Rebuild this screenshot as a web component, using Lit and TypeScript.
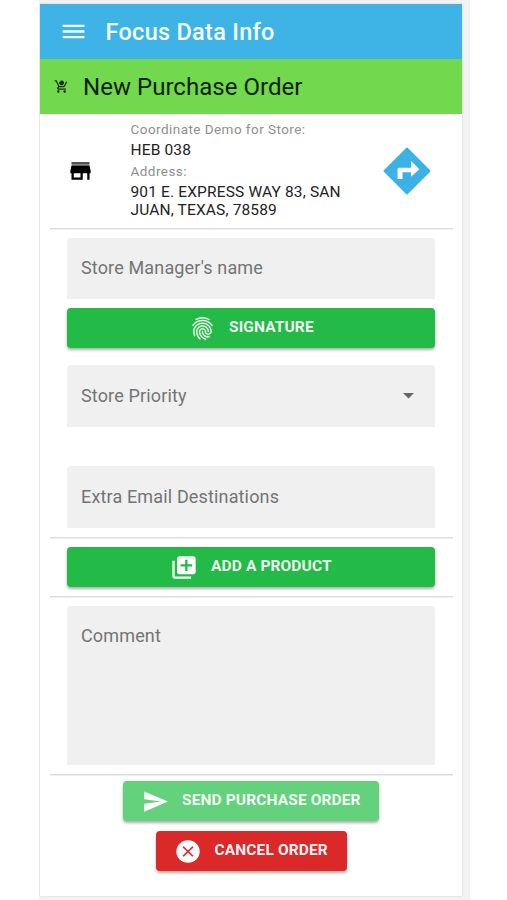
import { LitElement, html, css, svg } from "lit";
import { customElement } from "lit/decorators.js";

const icon = (cls: string, viewBox: string, body: unknown) =>
  html`<svg class="icon ${cls}" viewBox=${viewBox} preserveAspectRatio="none" aria-hidden="true">${body}</svg>`;

const menu = svg`<path d="M3 18.100h18v-2.200H3v2.200zm0-5h18v-2.200H3v2.200zm0-7.200v2.200h18V5.900H3z"/>`;
const cart = svg`<path d="M7 18c-1.100 0-2 .9-2 2s.9 2 2 2 2-.9 2-2-.9-2-2-2zm10 0c-1.100 0-2 .9-2 2s.9 2 2 2 2-.9 2-2-.9-2-2-2zM7.200 14.600L8.100 13h7.450c.75 0 1.410-.41 1.750-1.030l3.860-7.010L19.420 4l-3.870 7H8.530L4.270 2H1v2h2l3.600 7.590-1.350 2.440C4.520 15.370 5.480 17 7 17h12v-2H7.420c-.14 0-.25-.11-.25-.25z"/><path d="M9 4h2V2.500h3V4h2v3l-2 3h-3L8 7z"/>`;
const store = svg`<path d="M4 4h16v1.200H4z"/><path opacity=".45" d="M4 5.200h16V7H4z"/><path d="M20 7H4l-1 5v2h1v6h10v-6h4v6h2v-6h1v-2l-1-5zm-8 11H6v-4h6v4z"/>`;
const directions = svg`<path d="M12 2 22 12 12 22 2 12z" stroke="currentColor" stroke-width=".8" stroke-linejoin="round"/><path class="arrow" d="M13.800 14.500V12.500h-3.800v3H7.800v-4.200c0-.5.300-.8.800-.8h5.200V7.500l3.700 3.700z"/>`;
const fingerprint = svg`<path d="M17.810 4.470c-.08 0-.16-.02-.23-.06C15.660 3.420 14 3 12.010 3c-1.980 0-3.860.47-5.570 1.410-.24.130-.54.040-.68-.2-.13-.24-.04-.55.2-.68C7.820 2.520 9.860 2 12.010 2c2.130 0 3.990.47 6.030 1.520.25.130.34.430.21.670-.09.180-.26.280-.44.280zM3.500 9.720c-.1 0-.2-.03-.29-.09-.23-.16-.28-.47-.12-.7.990-1.400 2.250-2.500 3.750-3.270C9.980 4.040 14 4.030 17.150 5.650c1.500.77 2.760 1.860 3.750 3.250.16.220.11.540-.12.700-.23.160-.54.110-.7-.12-.9-1.260-2.040-2.250-3.390-2.940-2.870-1.470-6.540-1.470-9.400.01-1.360.7-2.500 1.700-3.400 2.960-.08.140-.23.210-.39.210zm6.250 12.070c-.13 0-.26-.05-.35-.15-.87-.87-1.340-1.430-2.010-2.640-.69-1.230-1.050-2.730-1.050-4.340 0-2.970 2.540-5.390 5.660-5.390s5.660 2.420 5.660 5.390c0 .28-.22.500-.5.500s-.5-.22-.5-.5c0-2.420-2.090-4.390-4.660-4.390s-4.660 1.970-4.660 4.390c0 1.440.32 2.770.93 3.850.64 1.150 1.080 1.640 1.850 2.420.19.200.19.510 0 .71-.11.100-.24.150-.37.150zm7.170-1.850c-1.190 0-2.240-.3-3.100-.89-1.490-1.010-2.380-2.650-2.380-4.390 0-.28.220-.5.500-.5s.5.220.5.500c0 1.410.72 2.740 1.940 3.560.71.480 1.540.71 2.540.71.240 0 .64-.03 1.040-.1.270-.05.530.13.580.41.050.270-.13.530-.41.580-.57.110-1.070.12-1.210.12zM14.910 22c-.04 0-.09-.01-.13-.02-1.590-.44-2.630-1.030-3.720-2.100-1.400-1.390-2.170-3.240-2.170-5.220 0-1.620 1.380-2.940 3.080-2.940s3.080 1.320 3.080 2.940c0 1.070.93 1.940 2.080 1.940s2.080-.87 2.080-1.940c0-3.770-3.250-6.830-7.250-6.830-2.840 0-5.440 1.580-6.610 4.030-.39.810-.59 1.760-.59 2.800 0 .78.070 2.010.67 3.610.1.260-.03.550-.29.640-.26.100-.55-.04-.64-.29-.49-1.310-.73-2.610-.73-3.960 0-1.200.23-2.290.68-3.240 1.330-2.790 4.280-4.600 7.510-4.600 4.550 0 8.250 3.510 8.250 7.830 0 1.620-1.380 2.940-3.080 2.940s-3.080-1.320-3.080-2.940c0-1.070-.93-1.940-2.080-1.940s-2.080.87-2.080 1.940c0 1.710.66 3.310 1.870 4.510.95.940 1.860 1.460 3.270 1.850.27.070.42.350.35.610-.05.230-.26.380-.47.380z"/>`;
const addBox = svg`<path d="M4 6H2v14c0 1.100.9 2 2 2h14v-2H4V6zm16-4H8c-1.100 0-2 .9-2 2v12c0 1.100.9 2 2 2h12c1.100 0 2-.9 2-2V4c0-1.100-.9-2-2-2zm-1 9h-4v4h-2v-4H9V9h4V5h2v4h4v2z"/>`;
const send = svg`<path d="M2 21 23 12 2 3v7l15 2-15 2z"/>`;
const cancel = svg`<circle cx="12" cy="12" r="10"/><path class="cross" d="m7.800 7.800 8.400 8.400m0-8.400-8.400 8.400"/>`;
const caret = svg`<path d="M0 0h10L5 5z"/>`;

@customElement("app-root")
export class AppRoot extends LitElement {
  static styles = css`
    :host {
      display: block;
      box-sizing: border-box;
      height: 900px;
      padding-left: 39px;
      background: #fff;
      font-family: Roboto, "Liberation Sans", sans-serif;
      color: #222;
    }
    .backdrop {
      box-sizing: border-box;
      width: 431px;
      height: 900px;
      padding: 4px 8px 4px 1px;
      background: #f3f3f4;
    }
    .page {
      display: flex;
      flex-direction: column;
      box-sizing: border-box;
      width: 422px;
      height: 892px;
      background: #fff;
      box-shadow: 0 0 2px #ccc;
    }
    .icon { display: block; flex: none; fill: currentColor; }
    .bar { display: flex; align-items: center; height: 55px; flex: none; white-space: nowrap; }
    .app { background: #3eb4e6; color: #f4fcff; font-size: 23.500px; font-weight: 500; letter-spacing: 0.28px; }
    .title { background: #72d84d; color: #10220a; font-size: 24px; letter-spacing: 0.03px; }
    .i-menu { width: 29px; height: 27px; margin: 0 18px 0 18.500px; }
    .i-cart { width: 15px; height: 15px; margin: 0 14px 0 14px; color: #152a0c; }
    .info {
      display: grid;
      grid-template-columns: 90px 1fr 87px;
      align-items: center;
      height: 114px;
      flex: none;
    }
    .i-store { width: 27px; height: 26px; margin-left: 27px; color: #000; }
    .i-dir { width: 54px; height: 54px; color: #3bb1e5; margin-left: 5px; }
    .arrow { fill: #fff; }
    .lines { white-space: nowrap; padding: 0 0 1px 0.500px; }
    .hint { font-size: 13.500px; line-height: 19px; letter-spacing: 0.45px; color: #8f8f8f; }
    .value { font-size: 15.500px; line-height: 18px; padding: 2px 0 2.500px; letter-spacing: 0.15px; }
    .rule { height: 1px; flex: none; margin: 0 9px 0 10px; background: #dcdcdc; box-shadow: 0 1px #f0f0f0; }
    .field {
      display: flex;
      align-items: center;
      justify-content: space-between;
      box-sizing: border-box;
      height: 62px;
      flex: none;
      margin: 0 27px;
      padding: 0 21px 0 14px;
      background: #f0f0f0;
      border-radius: 4px 4px 0 0;
      color: #747474;
      font-size: 18px;
      letter-spacing: 0.15px;
    }
    .field span { padding-bottom: 2px; }
    .first { margin-top: 9px; height: 61px; }
    .priority { margin-top: 17px; }
    .email { margin-top: 39px; margin-bottom: 9px; }
    .comment { height: 159px; margin-top: 9px; margin-bottom: 9px; align-items: flex-start; padding-top: 19px; }
    .i-caret { width: 11px; height: 5.500px; color: #666; }
    .btn {
      display: flex;
      align-items: center;
      box-sizing: border-box;
      height: 40px;
      flex: none;
      margin: 0 27px;
      padding: 0;
      border: 0;
      border-radius: 4px;
      background: #24ba47;
      color: #fff;
      font: 700 15.500px Roboto, "Liberation Sans", sans-serif;
      letter-spacing: 0.12px;
      white-space: nowrap;
      box-shadow: 0 2px 3px rgba(0, 0, 0, 0.32);
    }
    .label { padding-bottom: 2px; color: rgba(255, 255, 255, 0.94); }
    .sign { margin-top: 9px; padding-left: 122px; }
    .add { margin-top: 9px; margin-bottom: 9px; padding-left: 103px; }
    .send { align-self: center; width: 256px; margin: 6px 0 0; padding-left: 19px; background: #64d17d; }
    .cancel { align-self: center; width: 191px; margin: 10px 0 0; padding-left: 18px; background: #db2828; }
    .i-finger { width: 27px; height: 27px; margin-right: 13px; stroke: currentColor; stroke-width: 0.25; }
    .i-add { width: 28px; height: 27px; margin-right: 13px; }
    .i-send { width: 27px; height: 27px; margin-right: 13px; }
    .i-cancel { width: 28px; height: 27px; margin-right: 13px; }
    .cross { stroke: #db2828; stroke-width: 1.500; fill: none; }
  `;

  render() {
    return html`
      <div class="backdrop">
        <main class="page">
          <header class="bar app">${icon("i-menu", "0 0 24 24", menu)}<span>Focus Data Info</span></header>
          <div class="bar title">${icon("i-cart", "0 0 24 24", cart)}<span>New Purchase Order</span></div>
          <section class="info">
            ${icon("i-store", "0 0 24 24", store)}
            <div class="lines">
              <div class="hint">Coordinate Demo for Store:</div>
              <div class="value">HEB 038</div>
              <div class="hint">Address:</div>
              <div class="value">901 E. EXPRESS WAY 83, SAN<br />JUAN, TEXAS, 78589</div>
            </div>
            ${icon("i-dir", "0 0 24 24", directions)}
          </section>
          <div class="rule"></div>
          <div class="field first"><span>Store Manager's name</span></div>
          <button class="btn sign">${icon("i-finger", "0 0 24 24", fingerprint)}<span class="label">SIGNATURE</span></button>
          <div class="field priority"><span>Store Priority</span>${icon("i-caret", "0 0 10 5", caret)}</div>
          <div class="field email"><span>Extra Email Destinations</span></div>
          <div class="rule"></div>
          <button class="btn add">${icon("i-add", "0 0 24 24", addBox)}<span class="label">ADD A PRODUCT</span></button>
          <div class="rule"></div>
          <div class="field comment"><span>Comment</span></div>
          <div class="rule"></div>
          <button class="btn send">${icon("i-send", "0 0 24 24", send)}<span class="label">SEND PURCHASE ORDER</span></button>
          <button class="btn cancel">${icon("i-cancel", "0 0 24 24", cancel)}<span class="label">CANCEL ORDER</span></button>
        </main>
      </div>
    `;
  }
}
